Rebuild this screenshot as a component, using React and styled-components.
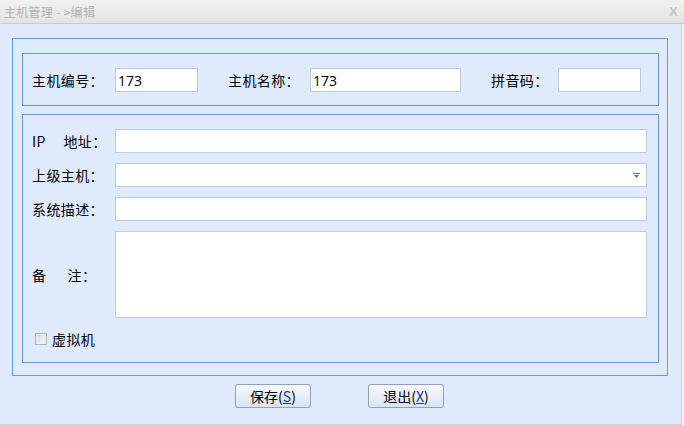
import React from "react";
import styled, { createGlobalStyle } from "styled-components";

const GlobalStyle = createGlobalStyle`
  html, body {
    margin: 0;
    padding: 0;
    background: #f4f4f4;
  }
  * {
    box-sizing: border-box;
  }
`;

const CN = `"Noto Sans CJK SC", "Liberation Sans", sans-serif`;

const Window = styled.div`
  width: 684px;
  height: 425px;
  display: flex;
  flex-direction: column;
  font-family: ${CN};
  font-size: 14px;
  color: #000;
`;

const TitleBar = styled.div`
  height: 24px;
  display: flex;
  align-items: center;
  justify-content: space-between;
  padding: 0 6px 0 4px;
  background: linear-gradient(#f1f1f1, #e3e3e3);
  border-bottom: 1px solid #c9c9c9;
  color: #b3b3b3;
  font-size: 12px;
  letter-spacing: 0.3px;
  white-space: pre;
`;

const Close = styled.span`
  font-family: "Liberation Sans", sans-serif;
  font-weight: bold;
  font-size: 13px;
  color: #c4c4c4;
`;

const Body = styled.div`
  flex: 1;
  background: #dfeafc;
  border-right: 1px solid #c8cdd4;
  border-bottom: 1px solid #cfcfcf;
  margin-right: 2px;
  padding: 14px 0 0 12px;
  display: flex;
  flex-direction: column;
`;

const OuterBox = styled.div`
  width: 656px;
  border: 1px solid #6c98d6;
  padding: 14px 8px 12px 9px;
  display: flex;
  flex-direction: column;
  gap: 8px;
`;

const Fieldset = styled.div`
  border: 1px solid #6c98d6;
  padding: ${(p) => p.$pad};
  display: flex;
  flex-direction: ${(p) => (p.$column ? "column" : "row")};
  align-items: ${(p) => (p.$column ? "stretch" : "center")};
`;

const Label = styled.label`
  width: ${(p) => p.$w}px;
  flex-shrink: 0;
  letter-spacing: 0.4px;
  white-space: pre;
`;

const Input = styled.input`
  width: ${(p) => (p.$w ? `${p.$w}px` : "auto")};
  flex: ${(p) => (p.$w ? "none" : "1")};
  height: 24px;
  border: 1px solid #b6cae4;
  background: #fff;
  padding: 0 2px;
  font-family: "Open Sans", "Liberation Sans", sans-serif;
  font-size: 14px;
  color: #000;
  outline: none;
  margin-right: ${(p) => p.$mr || 0}px;
`;

const Row = styled.div`
  display: flex;
  align-items: center;
  margin-right: 11px;
  margin-top: ${(p) => p.$mt || 0}px;
`;

const SelectBox = styled.div`
  flex: 1;
  height: 24px;
  border: 1px solid #b6cae4;
  background: #fff;
  display: flex;
  align-items: center;
  justify-content: flex-end;
  padding-right: 6px;
`;

const TextArea = styled.textarea`
  flex: 1;
  height: 87px;
  border: 1px solid #b6cae4;
  background: #fff;
  resize: none;
  outline: none;
`;

const CheckRow = styled.div`
  display: flex;
  align-items: center;
  gap: 5px;
  margin: 9px 0 0 3px;
  height: 24px;
  letter-spacing: 0.4px;
`;

const Check = styled.span`
  width: 12px;
  height: 12px;
  border: 1px solid #a5b3c6;
  background: linear-gradient(135deg, #d9d9d9, #f7f7f7);
  box-shadow: inset 0 0 0 1px #eef1f5;
`;

const Buttons = styled.div`
  display: flex;
  justify-content: center;
  gap: 57px;
  margin: 8px 0 0 -14px;
`;

const Button = styled.button`
  width: 76px;
  height: 24px;
  border: 1px solid #8ea2bf;
  border-radius: 3px;
  background: linear-gradient(#f7f9fc, #e9eff7 50%, #d9e3f1);
  font-family: ${CN};
  font-size: 14px;
  color: #000;
  padding: 0;
  u {
    color: #1b3a8a;
  }
`;

const Arrow = () => (
  <svg width="7" height="5" viewBox="0 0 7 5">
    <rect x="0" y="0" width="7" height="1" fill="#5074a8" />
    <polygon points="1,2 6,2 3.5,5" fill="#5074a8" />
  </svg>
);

export default function App() {
  return (
    <>
      <GlobalStyle />
      <Window>
        <TitleBar>
          <span>主机管理 - &gt;编辑</span>
          <Close>X</Close>
        </TitleBar>
        <Body>
          <OuterBox>
            <Fieldset $pad="14px 9px 13px 9px">
              <Label $w={83}>主机编号：</Label>
              <Input $w={83} $mr={30} defaultValue="173" />
              <Label $w={82}>主机名称：</Label>
              <Input $w={151} $mr={30} defaultValue="173" />
              <Label $w={67}>拼音码：</Label>
              <Input $w={83} defaultValue="" />
            </Fieldset>
            <Fieldset $column $pad="14px 0 11px 9px">
              <Row>
                <Label $w={83}>{"IP     地址："}</Label>
                <Input />
              </Row>
              <Row $mt={10}>
                <Label $w={83}>上级主机：</Label>
                <SelectBox>
                  <Arrow />
                </SelectBox>
              </Row>
              <Row $mt={10}>
                <Label $w={83}>系统描述：</Label>
                <Input />
              </Row>
              <Row $mt={10}>
                <Label $w={83}>{"备      注："}</Label>
                <TextArea />
              </Row>
              <CheckRow>
                <Check />
                <span>虚拟机</span>
              </CheckRow>
            </Fieldset>
          </OuterBox>
          <Buttons>
            <Button>
              保存(<u>S</u>)
            </Button>
            <Button>
              退出(<u>X</u>)
            </Button>
          </Buttons>
        </Body>
      </Window>
    </>
  );
}
